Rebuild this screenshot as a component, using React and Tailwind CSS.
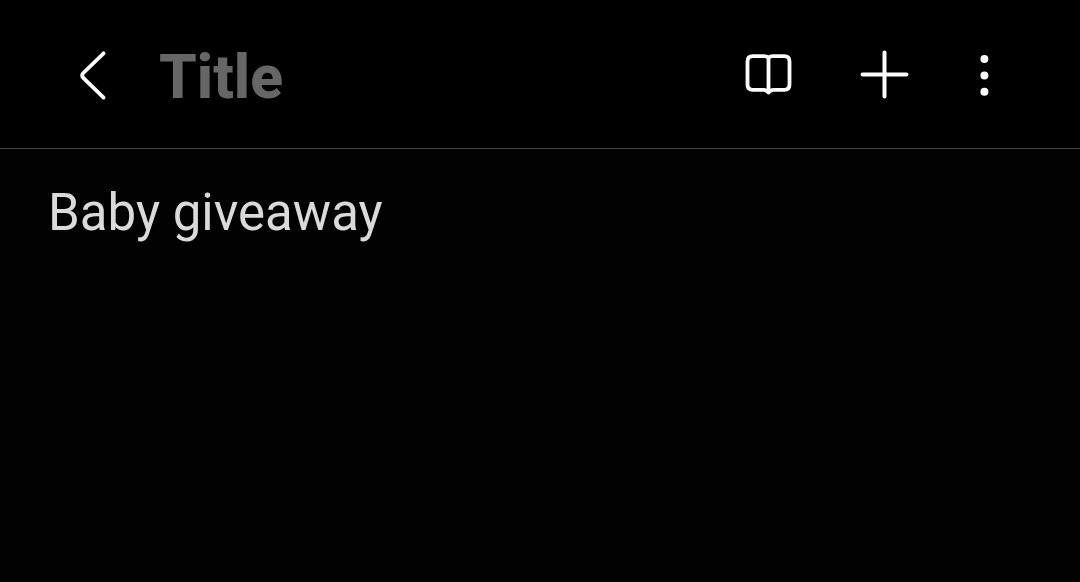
import React, { useState } from "react";

const BackIcon = () => (
  <svg className="h-14 w-8" viewBox="0 0 32 56" fill="none" stroke="#fcfcfc" strokeWidth="3.8" strokeLinecap="round">
    <path d="M27.6 6.3 L7.3 26 Q4.9 28.4 7.3 30.8 L27.6 50.6" />
  </svg>
);

const BookIcon = () => (
  <svg className="h-14 w-14" viewBox="0 0 56 56" fill="none" stroke="#fcfcfc" strokeWidth="3.8" strokeLinejoin="round">
    <path d="M28.5 10.6 Q26.6 9.2 24 9.2 H12.8 Q7.5 9.2 7.5 14.5 V37.5 Q7.5 42.8 12.8 42.8 H23.5 Q26.2 42.8 28.5 45.6 Q30.8 42.8 33.5 42.8 H44.2 Q49.5 42.8 49.5 37.5 V14.5 Q49.5 9.2 44.2 9.2 H33 Q30.4 9.2 28.5 10.6 Z" />
    <path d="M28.5 10.6 V45" />
  </svg>
);

const PlusIcon = () => (
  <svg className="h-14 w-14" viewBox="0 0 56 56" fill="none" stroke="#fcfcfc" strokeWidth="4" strokeLinecap="round">
    <path d="M28.5 5.4 V49.6 M6.5 27.5 H50.5" />
  </svg>
);

const MoreIcon = () => (
  <svg className="h-14 w-6" viewBox="0 0 24 56" fill="#fcfcfc">
    <circle cx="12.4" cy="12" r="4" />
    <circle cx="12.4" cy="28.4" r="4" />
    <circle cx="12.4" cy="44.8" r="4" />
  </svg>
);

const App = () => {
  const [title, setTitle] = useState("");
  const [note] = useState("Baby giveaway");

  return (
    <div className="flex flex-col h-screen bg-black overflow-hidden font-['Roboto',sans-serif]">
      <header className="flex h-[149px] shrink-0 items-start border-b border-[#454545] pt-[47px] pl-[76px] pr-[84px]">
        <button aria-label="Back">
          <BackIcon />
        </button>
        <input
          className="ml-[51px] h-[60px] w-[300px] min-w-0 bg-transparent text-[60.5px] leading-[60px] font-extrabold text-white outline-none placeholder:text-[#666666]"
          placeholder="Title"
          value={title}
          onChange={(e) => setTitle(e.target.value)}
        />
        <div className="ml-auto flex items-center">
          <button aria-label="Reading mode">
            <BookIcon />
          </button>
          <button className="ml-[60px]" aria-label="Add">
            <PlusIcon />
          </button>
          <button className="ml-[60px]" aria-label="More options">
            <MoreIcon />
          </button>
        </div>
      </header>

      <main className="flex-1 bg-[#020202] px-12 pt-[34px]">
        <p className="text-[51px] leading-[60px] text-[#dadada]">{note}</p>
      </main>
    </div>
  );
};

export default App;
